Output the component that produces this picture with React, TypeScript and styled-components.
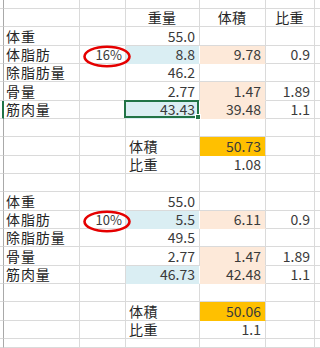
import React from 'react';
import styled, { createGlobalStyle } from 'styled-components';

const GlobalStyle = createGlobalStyle`
  *, *::before, *::after { box-sizing: border-box; }
  html, body { margin: 0; padding: 0; background: #ffffff; }
  body { font-family: "Noto Sans CJK JP", "Noto Sans", sans-serif; }
`;

type Fill = 'blue' | 'peach' | 'orange';
type Kind = 'label' | 'num' | 'head' | 'pct' | 'sub' | 'empty';

const GRID = '#dadada';
const FILLS: Record<Fill, string> = {
  blue: '#daeef3',
  peach: '#fde9d9',
  orange: '#ffc000',
};

const SPACING: Record<Kind, string> = {
  label: '0.9px',
  sub: '0.6px',
  head: '0.2px',
  num: '0',
  pct: '0',
  empty: '0',
};

const Sheet = styled.div`
  display: grid;
  grid-template-columns: 4px 76px 46px 74px 66px 49px 1fr;
  grid-template-rows: 9px repeat(18, 18.333px) 1fr;
  width: 320px;
  height: 348px;
  overflow: hidden;
  background: #ffffff;
`;

const RowHead = styled.div<{ $sel?: boolean }>`
  border-bottom: 1px solid ${GRID};
  border-right: ${(p) => (p.$sel ? '2px solid #217346' : '1px solid #a9a9a9')};
`;

const Cell = styled.div<{ $fill?: Fill; $kind: Kind }>`
  position: relative;
  display: flex;
  align-items: flex-end;
  justify-content: ${(p) =>
    p.$kind === 'head' ? 'center' : p.$kind === 'label' || p.$kind === 'sub' ? 'flex-start' : 'flex-end'};
  padding: 0 ${(p) => (p.$kind === 'pct' ? '3px' : '4px')} 0 ${(p) => (p.$kind === 'label' ? '2px' : '3px')};
  background: ${(p) => (p.$fill ? FILLS[p.$fill] : 'transparent')};
  border-right: 1px solid ${(p) => (p.$fill === 'blue' ? '#ffffff' : GRID)};
  border-bottom: 1px solid ${(p) => (p.$fill ? FILLS[p.$fill] : GRID)};
  font-size: ${(p) => (p.$kind === 'pct' ? '13px' : '14px')};
  letter-spacing: ${(p) => SPACING[p.$kind]};
  line-height: 17px;
  color: ${(p) => (p.$kind === 'num' || p.$kind === 'pct' ? '#3a3a3a' : '#262626')};
  white-space: nowrap;
`;

const Selection = styled.div`
  position: absolute;
  top: -1px;
  left: -2px;
  right: 0;
  bottom: 0;
  border: 2px solid #217346;
  pointer-events: none;
  z-index: 3;
`;

const FillHandle = styled.div`
  position: absolute;
  right: -4px;
  bottom: -4px;
  width: 6px;
  height: 6px;
  background: #217346;
  border: 1px solid #ffffff;
  z-index: 4;
`;

const Ring = styled.svg`
  position: absolute;
  left: 2px;
  top: -1px;
  width: 50px;
  height: 23px;
  overflow: visible;
  z-index: 5;
  pointer-events: none;
`;

type CellSpec = { t?: string; k?: Kind; fill?: Fill; sel?: boolean; ring?: boolean };
type RowSpec = { cells: CellSpec[]; sel?: boolean };

const L = (t: string): CellSpec => ({ t, k: 'label' });
const N = (t: string, fill?: Fill, sel?: boolean): CellSpec => ({ t, k: 'num', fill, sel });
const E: CellSpec = { k: 'empty' };

const block = (pct: string, vals: string[][], vol: string, sg: string, selLast: boolean): RowSpec[] => [
  { cells: [L('体重'), E, N(vals[0][0]), E, E] },
  { cells: [L('体脂肪'), { t: pct, k: 'pct', ring: true }, N(vals[1][0], 'blue'), N(vals[1][1], 'peach'), N(vals[1][2])] },
  { cells: [L('除脂肪量'), E, N(vals[2][0]), E, E] },
  { cells: [L('骨量'), E, N(vals[3][0]), N(vals[3][1], 'peach'), N(vals[3][2])] },
  {
    sel: selLast,
    cells: [L('筋肉量'), E, N(vals[4][0], 'blue', selLast), N(vals[4][1], 'peach'), N(vals[4][2])],
  },
  { cells: [E, E, E, E, E] },
  { cells: [E, E, { t: '体積', k: 'sub' }, N(vol, 'orange'), E] },
  { cells: [E, E, { t: '比重', k: 'sub' }, N(sg), E] },
];

const rows: RowSpec[] = [
  { cells: [E, E, E, E, E] },
  { cells: [E, E, { t: '重量', k: 'head' }, { t: '体積', k: 'head' }, { t: '比重', k: 'head' }] },
  ...block(
    '16%',
    [['55.0'], ['8.8', '9.78', '0.9'], ['46.2'], ['2.77', '1.47', '1.89'], ['43.43', '39.48', '1.1']],
    '50.73',
    '1.08',
    true
  ),
  { cells: [E, E, E, E, E] },
  ...block(
    '10%',
    [['55.0'], ['5.5', '6.11', '0.9'], ['49.5'], ['2.77', '1.47', '1.89'], ['46.73', '42.48', '1.1']],
    '50.06',
    '1.1',
    false
  ),
  { cells: [E, E, E, E, E] },
];

export default function App() {
  return (
    <>
      <GlobalStyle />
      <Sheet>
        {rows.map((row, ri) => (
          <React.Fragment key={ri}>
            <RowHead $sel={row.sel} />
            {row.cells.map((c, ci) => (
              <Cell key={ci} $fill={c.fill} $kind={c.k ?? 'empty'}>
                {c.t}
                {c.ring && (
                  <Ring viewBox="0 0 50 23">
                    <ellipse cx="25" cy="11.5" rx="22.5" ry="9.8" fill="none" stroke="#e50000" strokeWidth="2.6" />
                  </Ring>
                )}
                {c.sel && (
                  <Selection>
                    <FillHandle />
                  </Selection>
                )}
              </Cell>
            ))}
            <Cell $kind="empty" />
          </React.Fragment>
        ))}
      </Sheet>
    </>
  );
}
